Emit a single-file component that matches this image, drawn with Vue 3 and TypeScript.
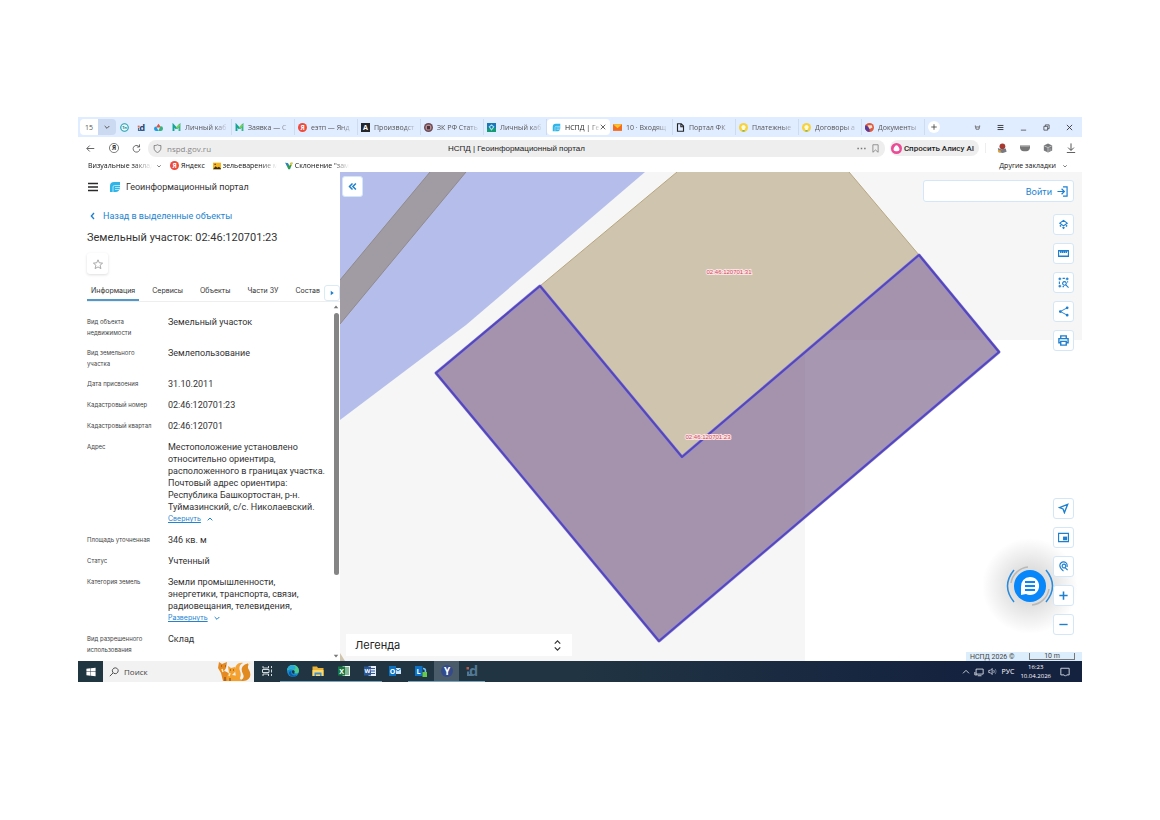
<script setup lang="ts">
import { h, ref } from 'vue'
import type { FunctionalComponent } from 'vue'

interface Shape {
  d?: string
  fill?: string
  stroke?: string
  w?: number
  t?: string
  x?: number
  y?: number
  s?: number
}

const BLUE = '#1c7fd0'
const line = (d: string, stroke = BLUE, w = 2): Shape => ({ d, stroke, w })
const solid = (d: string, fill = BLUE): Shape => ({ d, fill })
const word = (t: string, fill: string, s: number, x = 12, y = 18): Shape => ({ t, fill, s, x, y })
const disc = 'M12 0a12 12 0 1 0 0 24a12 12 0 1 0 0-24z'

const icons: Record<string, Shape[]> = {
  tn: [{ d: 'M12 2a10 10 0 1 0 0 20a10 10 0 1 0 0-20z', stroke: '#1d9fae', w: 3, fill: '#e8fafa' }, word('Tн', '#157f93', 10, 12, 16)],
  d: [word('d', '#274a75', 25, 14, 21), solid('M2 7h5v5H2z', '#d96b55'), line('M4 13v7h8', '#3c6b9c', 3)],
  cloud: [solid('M12 2l7 10H5z', '#e5533d'), solid('M0 15a6 6 0 0 1 6-6l6 12H5a6 6 0 0 1-5-6z', '#1f9be0'), solid('M24 15a6 6 0 0 0-7-6l-6 12h8a6 6 0 0 0 5-6z', '#36b37e')],
  m: [line('M4 21V6l8 9', '#12a594', 5), line('M12 15l8-9v15', '#37b58a', 5), line('M13 13l7-8', '#7bd04e', 5)],
  ya: [solid(disc, '#ee4b3c'), word('Я', '#fff', 17, 12, 18)],
  a: [solid('M0 0h24v24H0z', '#25272b'), word('A', '#fff', 19, 12, 19)],
  zk: [solid(disc, '#6b4b58'), solid('M12 4a8 8 0 1 0 0 16a8 8 0 1 0 0-16z', '#b88f8d'), solid('M8 8h8v9H8z', '#49333f')],
  gos: [solid('M0 0h24v24H0z', '#1976b8'), solid('M0 15l24 -2v11H0z', '#159a74'), line('M12 5l6 5-6 8-6-8z', '#9fe0e6', 3)],
  nspd: [solid('M2 10a8 8 0 0 1 8-8h12v11a9 9 0 0 1-9 9H2z', '#2fb4e8'), line('M8 22V12a3 3 0 0 1 3-3h11M12 13h10M12 17h9', '#d5f5ff', 1.5)],
  mail: [solid('M0 3h24v18H0z', '#f36c21'), solid('M0 3h24L12 14z', '#ffc52e')],
  doc: [line('M4 2h10l6 6v14H4zM13 2v8h7', '#252525', 3)],
  bulb: [solid(disc, '#f6d33e'), solid('M12 5a6 6 0 0 0-3 11v3h6v-3a6 6 0 0 0-3-11z', '#fffbe0'), line('M9 21h6', '#55a36c', 3)],
  docs: [solid(disc, '#dd5a3e'), solid('M12 24A12 12 0 0 1 2 5l10 9z', '#5a3a98'), solid('M7 6h11l2 6-8 4z', '#f8e2cc')],
  back: [line('M22 12H3M10 4l-8 8 8 8', '#333')],
  yaRing: [line('M12 1a11 11 0 1 0 0 22a11 11 0 1 0 0-22z', '#444', 1.6), word('Я', '#333', 15, 12, 17)],
  reload: [line('M21 13a9 9 0 1 1-3-7l2 2M20 1v7h-7', '#444')],
  shield: [line('M12 2c3 2 6 2 9 2v7c0 6-4 9-9 12-5-3-9-6-9-12V4c3 0 6 0 9-2z', '#666')],
  mark: [line('M5 2h14v20l-7-6-7 6z', '#777')],
  dots: [solid('M1 10h4v4H1zM10 10h4v4h-4zM19 10h4v4h-4z', '#777')],
  alice: [solid(disc, '#ec4b96'), solid('M12 5c3 0 8 8 6 11-2 3-10 3-12 0-2-3 3-11 6-11z', '#fff')],
  ext1: [solid('M13 1a7 7 0 1 0 0 14a7 7 0 1 0 0-14z', '#a93a32'), solid('M2 12l8 3 11-2 2 8-9 3-10-2z', '#777a83'), solid('M2 17l7 1v5l-6-1z', '#e1a32d')],
  ext2: [solid('M0 6h24v4c0 6-4 10-9 10H9c-5 0-9-4-9-10z', '#777'), line('M1 8h22', '#aaa', 2)],
  ext3: [solid('M12 1l10 5v12l-10 5-10-5V6z', '#77797c'), line('M3 7l9 4 9-4M12 11v11', '#ccc', 2), solid('M15 13h5v6h-5z', '#999')],
  down: [line('M12 1v16M5 11l7 7 7-7M2 23h20', '#333')],
  chevDown: [line('M5 9l7 7 7-7', '#555', 3)],
  chevBlue: [line('M5 9l7 7 7-7', BLUE, 3)],
  chevUp: [line('M5 16l7-7 7 7', BLUE, 3)],
  plusDark: [line('M12 1v22M1 12h22', '#333', 3)],
  close: [line('M3 3l18 18M21 3L3 21', '#333', 3)],
  menu: [line('M2 5h20M2 12h20M2 19h20', '#292929', 3)],
  minimize: [line('M3 21h18', '#333', 2.4)],
  restore: [line('M3 8h13v13H3zM8 8V3h13v13h-5', '#333', 2.4)],
  owl: [line('M4 6l3 12h10l3-12-5 4H9z', '#6d6d6d', 3), line('M8 13h2M14 13h2', '#666', 3)],
  photo: [solid('M0 2h24v20H0z', '#f4b61c'), solid('M0 22l8-9 5 4 5-3 6 6v2z', '#35291d'), solid('M4 5h5v4H4z', '#8b4c22')],
  fork: [solid('M1 2l8 2 4 8 4-10h6l-8 20h-5z', '#2b9c58'), solid('M1 2l8 2 2 5-5 2z', '#2f7fd6'), solid('M17 2h6l-3 8-6-1z', '#f2c72d')],
  left: [line('M15 3l-8 9 8 9', BLUE, 4)],
  dbl: [line('M12 4l-8 8 8 8M21 4l-8 8 8 8', BLUE, 4)],
  star: [line('M12 2l3 7 8 1-6 5 2 8-7-4-7 4 2-8-6-5 8-1z', '#999', 2)],
  play: [solid('M7 3l12 9-12 9z')],
  login: [line('M1 12h14M10 6l6 6-6 6M13 2h9v20h-9', BLUE, 2.6)],
  layers: [line('M12 3l8 6-8 6-8-6z', BLUE, 2.6), line('M4 14l3 2M10 18l2 2 2-2M17 16l3-2', BLUE, 3)],
  ruler: [line('M1 6h22v12H1zM6 6v5M10 6v5M14 6v5M18 6v5', BLUE, 3)],
  area: [line('M4 1v6M1 4h6M10 3h5M20 1v6M17 4h6M3 10v5M1 20h6M4 17v6M21 9v3M10 21h3', BLUE, 2.4), line('M14 10a4 4 0 1 0 .1 0M17 17l6 6', BLUE, 2.4)],
  share: [line('M20 4L5 12l15 8', BLUE, 2), solid('M20 1a3 3 0 1 0 0 6a3 3 0 1 0 0-6zM5 9a3 3 0 1 0 0 6a3 3 0 1 0 0-6zM20 17a3 3 0 1 0 0 6a3 3 0 1 0 0-6z')],
  print: [line('M6 8V2h12v6M6 17H2V8h20v9h-4M6 14h12v8H6z', BLUE, 3)],
  locate: [line('M21 3L3 10l8 3 3 8z', BLUE, 3)],
  pip: [line('M1 3h22v18H1z', BLUE, 3), line('M13 12h5v4h-5z', BLUE, 4)],
  pin: [line('M12 22c-5-4-8-7-8-12a8 8 0 0 1 16 0v3', BLUE, 2.4), line('M13 7a4 4 0 1 0 .1 0M15 14l6 6', BLUE, 2.6)],
  plus: [line('M12 3v18M3 12h18', BLUE, 3.4)],
  minus: [line('M3 12h18', BLUE, 3)],
  updown: [line('M6 8l6-6 6 6M6 16l6 6 6-6', '#333', 2.6)],
  win: [solid('M1 4l10-1v8H1zM12 3l11-1v9H12zM1 12h10v9l-10-1zM12 12h11v10l-11-1z', '#fff')],
  search: [line('M15 2a7 7 0 1 0 .1 0M10 14l-8 8', '#333', 2)],
  task: [line('M4 2v4h11V2M4 22v-4h11v4M3 9h13v6H3zM21 2v4M21 9v6M21 18v4', '#e7edf0', 1.8)],
  edge: [solid(disc, '#1689d3'), solid('M0 11a12 12 0 0 1 24 1c0 5-6 6-9 4 3-6-6-11-15-5z', '#4ccb8a'), solid('M0 11a12 12 0 0 1 11-11c8 2 7 8 3 10-4-4-10-3-14 1z', '#27a9dc'), solid('M9 12c-3 6 3 11 11 8-7 8-20 1-15-7z', '#0f5c9f'), solid('M10 12c2-3 6-1 5 3-2 0-1 3 1 3-4 0-7-2-6-6z', '#203640')],
  folder: [solid('M1 3h9l2 3h11v16H1z', '#eab338'), solid('M1 10h22v12H1z', '#ffd868'), solid('M5 15h14v7h-3v-3H8v3H5z', '#3c8ed0')],
  excel: [solid('M9 2h15v20H9z', '#e8f3eb'), line('M12 6h10M12 10h10M12 14h10M12 18h10', '#1c7a45', 2), solid('M0 3h14v18H0z', '#167541'), word('X', '#fff', 14, 7, 17)],
  wordApp: [solid('M9 2h15v20H9z', '#e6eefa'), line('M13 7h9M13 12h9M13 17h9', '#2a579a', 2), solid('M0 3h14v18H0z', '#2a579a'), word('W', '#fff', 12, 7, 16)],
  outlook: [solid('M11 6h13v12H11z', '#cbe6fb'), line('M12 7l6 5 6-5', '#1178c8', 2), solid('M0 2h14v20H0z', '#0b72c4'), word('O', '#fff', 14, 7, 17)],
  lync: [solid('M0 2h15v20H0z', '#0d72c5'), word('L', '#fff', 14, 7, 17), line('M16 7a5 5 0 1 1 0 10', '#73c3f3', 3), solid('M15 14h9v10h-9z', '#65c94b')],
  yApp: [solid(disc, '#334b8c'), word('Y', '#fff', 20, 12, 19)],
  dTask: [word('d', '#527894', 29, 15, 22), solid('M1 4h5v5H1z', '#b65b47'), line('M4 13v7h8', '#527894', 4)],
  up: [line('M3 16l9-9 9 9', '#dce5ef', 2.6)],
  monitor: [line('M5 5h17v12H5zM9 21h9M2 12v7h6', '#e4eaf1')],
  sound: [line('M2 9h4l5-5v16l-5-5H2zM15 8c2 3 2 5 0 8', '#e4eaf1'), line('M19 5c3 4 3 10 0 14', '#78869d')],
  notice: [line('M2 3h20v16h-6l-3 3-3-3H2z', '#d7dfe9', 2.2)],
  arrowUp: [solid('M3 17l9-11 9 11z', '#777')],
  arrowDown: [solid('M3 7l9 11 9-11z', '#777')],
}

const Ico: FunctionalComponent<{ n: string }> = (props) =>
  h('svg', { viewBox: '0 0 24 24', 'aria-hidden': 'true' }, icons[props.n].map((p) =>
    p.t
      ? h('text', { x: p.x, y: p.y, 'font-size': p.s, fill: p.fill, 'font-weight': 700, 'text-anchor': 'middle', 'font-family': 'Open Sans, sans-serif' }, p.t)
      : h('path', { d: p.d, fill: p.fill ?? 'none', stroke: p.stroke, 'stroke-width': p.w }),
  ))
Ico.props = ['n']

const pinned = [['tn', 'Тн'], ['d', 'd'], ['cloud', 'Облако']]
const tabs = [
  { i: 'm', t: 'Личный каб' }, { i: 'm', t: 'Заявка — С' }, { i: 'ya', t: 'еэтп — Янд' },
  { i: 'a', t: 'Производст' }, { i: 'zk', t: 'ЗК РФ Стать' }, { i: 'gos', t: 'Личный каб' },
  { i: 'nspd', t: 'НСПД | Ге' }, { i: 'mail', t: '10 · Входящ' }, { i: 'doc', t: 'Портал ФК' },
  { i: 'bulb', t: 'Платежные' }, { i: 'bulb', t: 'Договоры а' }, { i: 'docs', t: 'Документы' },
]
const windowIcons = [['owl', 'Профиль'], ['menu', 'Меню'], ['minimize', 'Свернуть окно'], ['restore', 'Восстановить'], ['close', 'Закрыть окно']]
const extensions = [['ext1', 'Расширение 1'], ['ext2', 'Расширение 2'], ['ext3', 'Расширение 3'], ['down', 'Загрузки']]
const sections = ['Информация', 'Сервисы', 'Объекты', 'Части ЗУ', 'Состав']
const section = ref('Информация')
const url = ref('nspd.gov.ru')
const query = ref('')

const fields = [
  { k: 'Вид объекта недвижимости', v: ['Земельный участок'] },
  { k: 'Вид земельного участка', v: ['Землепользование'] },
  { k: 'Дата присвоения', v: ['31.10.2011'] },
  { k: 'Кадастровый номер', v: ['02:46:120701:23'] },
  { k: 'Кадастровый квартал', v: ['02:46:120701'] },
  { k: 'Адрес', v: ['Местоположение установлено', 'относительно ориентира,', 'расположенного в границах участка.', 'Почтовый адрес ориентира:', 'Республика Башкортостан, р-н.', 'Туймазинский, с/с. Николаевский.'], more: 'Свернуть', chev: 'chevUp' },
  { k: 'Площадь уточненная', v: ['346 кв. м'] },
  { k: 'Статус', v: ['Учтенный'] },
  { k: 'Категория земель', v: ['Земли промышленности,', 'энергетики, транспорта, связи,', 'радиовещания, телевидения,'], more: 'Развернуть', chev: 'chevBlue' },
  { k: 'Вид разрешенного использования', v: ['Склад'] },
]
const topTools = [['layers', 'Слои'], ['ruler', 'Измерения'], ['area', 'Выбор области'], ['share', 'Поделиться'], ['print', 'Печать']]
const lowTools = [['locate', 'Моё местоположение'], ['pip', 'Обзорная карта'], ['pin', 'Поиск по точке'], ['plus', 'Приблизить'], ['minus', 'Отдалить']]
const apps = [
  { i: 'task', n: 'Представление задач' }, { i: 'edge', n: 'Edge', run: true }, { i: 'folder', n: 'Проводник', run: true },
  { i: 'excel', n: 'Excel', run: true }, { i: 'wordApp', n: 'Word', run: true }, { i: 'outlook', n: 'Outlook' },
  { i: 'lync', n: 'Lync', run: true }, { i: 'yApp', n: 'Браузер', on: true, run: true }, { i: 'dTask', n: 'Приложение d', run: true },
]
</script>

<template>
  <div class="page">
    <div class="desktop">
      <header class="browser">
        <div class="tabstrip">
          <button class="count">15</button>
          <button class="count-menu" aria-label="Список вкладок"><Ico n="chevDown" class="i8" /></button>
          <button v-for="p in pinned" :key="p[0]" class="pinned" :aria-label="p[1]"><Ico :n="p[0]" class="i9" /></button>
          <div class="tabs">
            <div v-for="(t, n) in tabs" :key="n" class="tab" :class="{ active: n === 6 }">
              <button class="tab-main"><Ico :n="t.i" class="i9" /><span class="fade">{{ t.t }}</span></button>
              <button v-if="n === 6" class="tab-close" aria-label="Закрыть вкладку"><Ico n="close" class="i6" /></button>
            </div>
          </div>
          <button class="new-tab" aria-label="Новая вкладка"><Ico n="plusDark" class="i6" /></button>
          <div class="window-buttons">
            <button v-for="w in windowIcons" :key="w[0]" :aria-label="w[1]"><Ico :n="w[0]" class="i7" /></button>
          </div>
        </div>
        <div class="address">
          <div class="nav">
            <button aria-label="Назад"><Ico n="back" class="i9" /></button>
            <button aria-label="Яндекс"><Ico n="yaRing" class="i10" /></button>
            <button aria-label="Обновить"><Ico n="reload" class="i9" /></button>
          </div>
          <div class="field">
            <div class="field-url"><Ico n="shield" class="i9" /><input v-model="url" aria-label="Адрес" /></div>
            <span class="page-title">НСПД | Геоинформационный портал</span>
            <div class="field-tools">
              <button aria-label="Ещё"><Ico n="dots" class="i9" /></button>
              <button aria-label="В закладки"><Ico n="mark" class="i9" /></button>
            </div>
          </div>
          <button class="alice"><Ico n="alice" class="i11" />Спросить Алису AI</button>
          <div class="extensions">
            <button v-for="e in extensions" :key="e[0]" :aria-label="e[1]"><Ico :n="e[0]" class="i10" /></button>
          </div>
        </div>
        <nav class="bookmarks">
          <a href="#" class="visual"><span class="fade">Визуальные заклад</span><Ico n="chevDown" class="i6" /></a>
          <a href="#"><Ico n="ya" class="i9" />Яндекс</a>
          <a href="#"><Ico n="photo" class="i8" /><span class="fade cut">зельеварение ма</span></a>
          <a href="#"><Ico n="fork" class="i8" /><span class="fade cut">Склонение "замо</span></a>
          <a href="#" class="other">Другие закладки<Ico n="chevDown" class="i6" /></a>
        </nav>
      </header>

      <main class="portal">
        <aside class="panel">
          <div class="brand">
            <button aria-label="Меню портала"><Ico n="menu" class="i12" /></button>
            <Ico n="nspd" class="i12" /><span>Геоинформационный портал</span>
          </div>
          <a href="#" class="back"><Ico n="left" class="i8" />Назад в выделенные объекты</a>
          <h1>Земельный участок: 02:46:120701:23</h1>
          <button class="fav" aria-label="В избранное"><Ico n="star" class="i10" /></button>
          <div class="sections">
            <div class="section-list" role="tablist">
              <button v-for="s in sections" :key="s" role="tab" :aria-selected="section === s" :class="{ on: section === s }" @click="section = s">{{ s }}</button>
            </div>
            <button class="next" aria-label="Следующие разделы"><Ico n="play" class="i6" /></button>
          </div>
          <div class="details">
            <dl>
              <div v-for="f in fields" :key="f.k" class="row">
                <dt>{{ f.k }}</dt>
                <dd>
                  <span v-for="l in f.v" :key="l" class="line">{{ l }}</span>
                  <a v-if="f.more" href="#" class="more"><u>{{ f.more }}</u><Ico :n="f.chev" class="i8" /></a>
                </dd>
              </div>
            </dl>
            <div class="scroll" aria-hidden="true"><Ico n="arrowUp" class="i6" /><i></i><Ico n="arrowDown" class="i6" /></div>
          </div>
        </aside>

        <section class="map" aria-label="Карта">
          <svg class="canvas" viewBox="0 0 742 489" preserveAspectRatio="xMinYMin slice">
            <path d="M0 0H742V489H0z" fill="#f6f6f6" />
            <path d="M0 0H305L126 153L0 248z" fill="#b5beeb" />
            <path d="M0 108L90 0H126L0 152z" fill="#a19ca4" />
            <path d="M0 108L90 0M126 0L0 152" fill="none" stroke="#918a88" />
            <path d="M465 168H742V489H465z" fill="#fff" />
            <path d="M200 114L337 0H509L579 83L342 285z" fill="#cfc4ad" />
            <path d="M200 114L337 0M509 0L579 83" fill="none" stroke="#b8a680" />
            <path d="M0 481L5 489H0z" fill="#cfc4ad" />
            <path d="M200 114L96 201L319 469L659 180L579 83L342 285z" fill="#a593ad" />
            <path d="M465 180L479 168H649L659 180L465 345z" fill="#a897b1" />
            <path d="M200 114L96 201L319 469L659 180L579 83L342 285z" fill="none" stroke="#8c87e8" stroke-width="3" stroke-linejoin="round" />
            <path d="M200 114L96 201L319 469L659 180L579 83L342 285z" fill="none" stroke="#5647b5" stroke-width="2" stroke-linejoin="round" />
            <g class="parcel"><text x="389" y="102">02:46:120701:31</text><text x="368" y="267">02:46:120701:23</text></g>
          </svg>
          <button class="tool collapse" aria-label="Скрыть панель"><Ico n="dbl" class="i9" /></button>
          <button class="login">Войти<Ico n="login" class="i11" /></button>
          <div class="tools top"><button v-for="t in topTools" :key="t[0]" class="tool" :aria-label="t[1]"><Ico :n="t[0]" class="i11" /></button></div>
          <button class="chat" aria-label="Чат">
            <svg viewBox="0 0 48 48" aria-hidden="true">
              <circle cx="24" cy="24" r="16" fill="#0787fa" />
              <path d="M8 8Q-5 24 8 40M40 8Q53 24 40 40" fill="none" stroke="#288bdd" stroke-width="1.5" />
              <path d="M5 21A19 19 0 0 1 22 5M43 27A19 19 0 0 1 26 43" fill="none" stroke="#b9b9b9" stroke-width="1.5" />
              <path d="M24 15a9 9 0 1 1-4 17l-5 1v-8a9 9 0 0 1 9-10z" fill="#fff" />
              <path d="M19 20h10M19 24h10M19 28h10" stroke="#0787fa" stroke-width="2" />
            </svg>
          </button>
          <div class="tools low"><button v-for="t in lowTools" :key="t[0]" class="tool" :aria-label="t[1]"><Ico :n="t[0]" class="i11" /></button></div>
          <button class="legend">Легенда<Ico n="updown" class="i11" /></button>
          <div class="credit"><span>НСПД 2026 ©</span><span class="scale">10 m</span></div>
        </section>
      </main>

      <footer class="taskbar">
        <button class="start" aria-label="Пуск"><Ico n="win" class="i10" /></button>
        <label class="search">
          <Ico n="search" class="i10" /><input v-model="query" placeholder="Поиск" aria-label="Поиск" />
          <svg class="foxes" viewBox="0 0 34 21" aria-hidden="true">
            <path d="M19 20c6 0 9-3 7-7-3-5-1-10 7-11-2 2-3 4-1 7 3 5 1 11-6 11z" fill="#e08a20" />
            <path d="M15 19c6-1 3-6 3-10 0-4 3-8 8-7-4 2-4 5-3 8 2 5 0 9-4 10z" fill="#f3a233" />
            <path d="M2 1l3 2 5-2-1 6-2 3c5 1 7 5 7 10H6L4 12 1 7z" fill="#e58a22" />
            <path d="M11 5l3 2 4-1v5l-3 3c5 0 8 3 10 6H10c-1-4 0-6 2-8z" fill="#f4a02c" />
            <path d="M5 8l1 3M13 12l-1 3M31 3l2-1" fill="none" stroke="#ffe9b8" stroke-width="1.5" />
            <path d="M4 5h1M8 5h1M13 9h1M16 9h1M8 20v-4M13 20v-3" stroke="#84430e" />
          </svg>
        </label>
        <nav class="apps"><button v-for="a in apps" :key="a.i" :class="{ on: a.on, run: a.run }" :aria-label="a.n"><Ico :n="a.i" class="i12" /></button></nav>
        <div class="tray">
          <Ico n="up" class="i8" /><Ico n="monitor" class="i10" /><Ico n="sound" class="i9" /><span>РУС</span>
          <time><span>16:23</span><span>10.04.2026</span></time><Ico n="notice" class="i10" />
        </div>
      </footer>
    </div>
  </div>
</template>

<style>
body { margin: 0; background: #fff; }
</style>

<style scoped>
* { box-sizing: border-box; }
button, input { font: inherit; color: inherit; margin: 0; padding: 0; border: 0; background: none; }
button { display: flex; align-items: center; justify-content: center; white-space: nowrap; cursor: pointer; }
a { color: inherit; text-decoration: none; }
svg { flex: none; display: block; }
.i6 { width: 6px; height: 6px; }
.i7 { width: 7px; height: 7px; }
.i8 { width: 8px; height: 8px; }
.i9 { width: 9px; height: 9px; }
.i10 { width: 10px; height: 10px; }
.i11 { width: 11px; height: 11px; }
.i12 { width: 12px; height: 12px; }
.page { min-height: 100vh; display: flex; padding: 117px 78px 138px; background: #fff; color: #333; font-family: Inter, "Liberation Sans", sans-serif; font-size: 8px; }
.desktop { flex: 1; min-width: 0; display: flex; flex-direction: column; }
.browser { font-family: "Open Sans", "Noto Sans", sans-serif; font-size: 7px; }
.fade { overflow: hidden; white-space: nowrap; mask-image: linear-gradient(90deg, #000 70%, transparent); }
.tabstrip { height: 20px; display: flex; align-items: center; background: #e0ecff; padding-left: 2px; color: #555; }
.count { width: 18px; height: 16px; background: #fff; border-radius: 4px 0 0 4px; }
.count-menu { width: 18px; height: 16px; background: #cbdaf0; border-radius: 0 4px 4px 0; }
.pinned { width: 17px; }
.tabs { display: flex; margin-left: 2px; }
.tab { width: 63px; height: 16px; display: flex; align-items: center; padding: 0 3px; border-right: 1px solid #cfdcf0; }
.tab-main { flex: 1; min-width: 0; gap: 4px; justify-content: flex-start; }
.tab-main .fade { flex: 1; text-align: left; }
.tab.active { background: #fff; border-radius: 4px; border-color: #fff; color: #222; padding-left: 5px; }
.new-tab { width: 12px; height: 12px; margin-left: 3px; background: #fff; border-radius: 6px; }
.window-buttons { margin-left: auto; display: flex; padding-right: 1px; }
.window-buttons button { width: 23px; }
.address { height: 22px; display: flex; align-items: center; }
.nav { display: flex; padding-left: 1px; }
.nav button { width: 23px; }
.field { flex: 1; height: 17px; display: grid; grid-template-columns: 1fr auto 1fr; align-items: center; background: #eee; border-radius: 8px; padding: 0 5px; }
.field-url { display: flex; gap: 5px; align-items: center; color: #888; font-size: 8px; }
.field-url input { width: 100%; }
.page-title { font-family: "Liberation Sans", sans-serif; font-size: 8px; color: #222; }
.field-tools { display: flex; gap: 5px; justify-content: flex-end; }
.alice { height: 16px; gap: 2px; margin-left: 5px; padding: 0 5px 0 1px; border-radius: 8px; background: #eee; font-family: Roboto, sans-serif; font-size: 8px; font-weight: 500; color: #222; }
.extensions { display: flex; margin-left: 6px; border-left: 1px solid #eee; padding-left: 4px; }
.extensions button { width: 23px; }
.bookmarks { height: 13px; display: flex; align-items: center; padding: 0 14px 0 10px; gap: 8px; color: #111; }
.bookmarks a { display: flex; align-items: center; gap: 2px; white-space: nowrap; }
.bookmarks .visual { gap: 4px; }
.visual .fade { width: 64px; }
.cut { width: 54px; }
.bookmarks .other { margin-left: auto; gap: 6px; }

.portal { flex: 1; min-height: 0; display: flex; }
.panel { width: 262px; flex: none; display: flex; flex-direction: column; align-items: flex-start; padding-left: 9px; background: #fff; font-family: Roboto, Inter, sans-serif; }
.brand { height: 29px; display: flex; align-items: center; gap: 5px; font-size: 9px; }
.brand button { margin-right: 5px; }
.back { height: 29px; display: flex; align-items: center; gap: 6px; padding-left: 2px; color: #2483cf; font-size: 9px; }
h1 { margin: 0; font-size: 11px; line-height: 16px; font-weight: 400; color: #333; }
.fav { width: 21px; height: 21px; margin: 7px 0 8px; border-radius: 3px; box-shadow: 0 1px 3px #ddd; background: #fff; }
.sections { width: 100%; height: 20px; display: flex; justify-content: space-between; font-family: Inter, sans-serif; font-size: 7px; padding-right: 3px; border-bottom: 1px solid #eee; }
.section-list { display: flex; gap: 9px; }
.section-list button { padding: 0 4px; border-bottom: 2px solid transparent; }
.section-list .on { border-color: #5298c8; }
.next { flex: none; width: 16px; height: 16px; margin-top: 3px; border: 1px solid #dbeaf7; border-radius: 3px; background: #fff; }
.details { width: 100%; flex: 1; display: flex; min-height: 0; height: 0; }
dl { flex: 1; margin: 0; padding-top: 14px; display: flex; flex-direction: column; gap: 9px; overflow: hidden; }
.row { display: grid; grid-template-columns: 70px 1fr; gap: 11px; flex: none; }
dt { font-family: Inter, sans-serif; font-size: 6px; line-height: 11px; color: #444; }
dd { margin: 0; line-height: 12px; font-size: 9px; }
.line { display: block; white-space: nowrap; }
.more { display: flex; align-items: center; gap: 5px; font-family: Inter, sans-serif; font-size: 7px; line-height: 12px; color: #2483cf; }
.scroll { width: 8px; display: flex; flex-direction: column; align-items: center; justify-content: space-between; padding: 2px 0; }
.scroll i { width: 5px; height: 262px; border-radius: 3px; background: #858585; margin-bottom: 75px; }

.map { flex: 1; min-width: 0; position: relative; overflow: hidden; }
.canvas { position: absolute; inset: 0; width: 100%; height: 100%; }
.parcel { font: 6px "Liberation Sans", sans-serif; fill: #cf4a5c; stroke: #fbe3e3; stroke-width: 2px; paint-order: stroke; text-anchor: middle; }
.tool { width: 21px; height: 21px; border: 1px solid #d5e7f7; border-radius: 3px; background: #fff; }
.collapse { position: absolute; left: 2px; top: 4px; }
.login { position: absolute; right: 8px; top: 8px; width: 151px; height: 22px; justify-content: flex-end; gap: 5px; padding-right: 5px; border: 1px solid #d5e7f7; border-radius: 3px; background: #fff; color: #2483cf; font-size: 9px; }
.tools { position: absolute; right: 8px; display: grid; gap: 8px; }
.top { top: 42px; }
.low { bottom: 26px; }
.chat { position: absolute; right: 4px; bottom: 27px; width: 96px; height: 96px; border-radius: 50%; background: radial-gradient(closest-side, #0003, #0000); }
.chat svg { width: 48px; height: 48px; }
.legend { position: absolute; left: 6px; bottom: 5px; width: 226px; height: 22px; justify-content: space-between; padding: 0 9px; background: #fff; font-size: 11px; color: #222; }
.credit { position: absolute; right: 0; bottom: 0; height: 9px; width: 116px; display: flex; align-items: center; justify-content: space-between; padding: 0 7px 0 4px; background: #dcedfb; font-family: Roboto, sans-serif; font-size: 7px; color: #444; }
.scale { width: 46px; height: 7px; line-height: 7px; text-align: center; border: 1px solid #777; border-top: 0; }

.taskbar { height: 21px; display: flex; background: linear-gradient(90deg, #203640, #203442 50%, #14213f 90%); font-family: "Open Sans", sans-serif; }
.start { width: 25px; }
.search { width: 151px; display: flex; align-items: center; gap: 5px; padding: 0 3px 0 6px; background: #f2f2f2; color: #444; }
.search input { flex: 1; min-width: 0; }
.search input::placeholder { color: #444; opacity: 1; }
.foxes { width: 34px; height: 21px; }
.apps { display: flex; width: 231px; }
.apps button { flex: 1; height: 21px; border-bottom: 1px solid transparent; }
.apps .run { border-color: #78a6bf; }
.apps .on { background: #4a5c69; }
.tray { margin-left: auto; display: flex; align-items: center; gap: 4px; padding-right: 12px; color: #fff; font-size: 7px; }
time { display: grid; text-align: center; font-size: 6px; line-height: 9px; margin: 0 5px 0 2px; }
</style>
